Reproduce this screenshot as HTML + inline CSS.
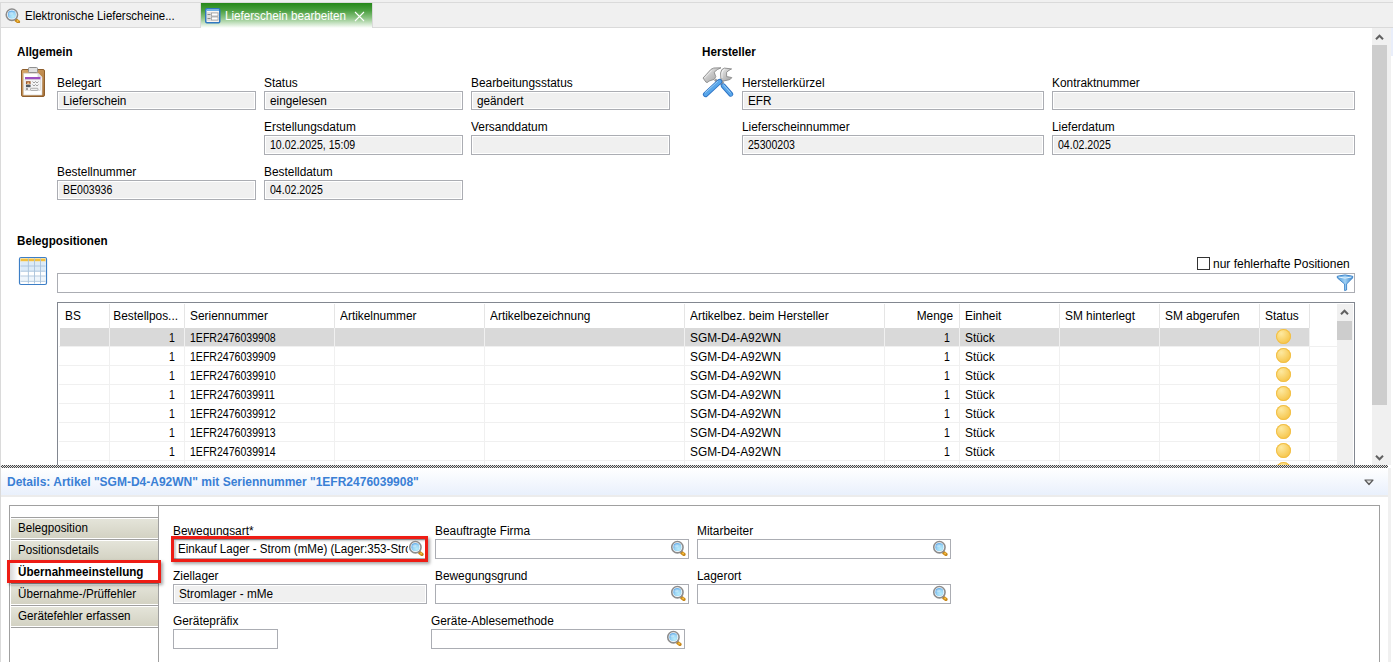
<!DOCTYPE html>
<html><head><meta charset="utf-8">
<style>
*{box-sizing:border-box;margin:0;padding:0}
html,body{width:1393px;height:662px;overflow:hidden;background:#fff;font-family:"Liberation Sans",sans-serif;font-size:12px;color:#000}
.a{position:absolute}
.l{position:absolute;font-size:12px;white-space:nowrap;line-height:14px;transform-origin:0 0;transform:scaleX(.99)}
.n{transform:scaleX(.88)!important}
.r{transform-origin:100% 0}
.t{display:inline-block;transform-origin:0 0;transform:scaleX(.98)}
.t.n{transform:scaleX(.88)}
.f{position:absolute;height:19px;border:1px solid #abadb3;background:#f0f0f0;box-shadow:inset 0 0 0 1px #fff;font-size:12px;line-height:18px;padding-left:5px;white-space:nowrap;overflow:hidden}
.w{background:#fff;box-shadow:none}
.h{position:absolute;font-weight:bold;font-size:12px;line-height:14px;white-space:nowrap;transform-origin:0 0;transform:scaleX(.97)}
.st{position:absolute;width:15px;height:15px;border-radius:50%;background:radial-gradient(circle at 35% 30%,#fde9a0,#f6c54a 75%);box-shadow:inset 0 0 0 1px #f2bf45}
.nv{position:absolute;left:11px;width:147px;height:19px;background:linear-gradient(#e4e4d9,#d3d2c3);font-size:12px;line-height:14px;padding:2px 0 0 7px;white-space:nowrap}
.nv .t{transform:scaleX(.97)}
.mg{position:absolute;width:16px;height:16px}
</style></head><body>
<svg width="0" height="0" style="position:absolute">
<defs>
<radialGradient id="mgb" cx="0.65" cy="0.7" r="0.75"><stop offset="0" stop-color="#b8ecfb"/><stop offset="0.6" stop-color="#9ad4f4"/><stop offset="1" stop-color="#5aa6e6"/></radialGradient>
<symbol id="mag" viewBox="0 0 16 16">
<path d="M10.4 10.2 L12.4 12.2" stroke="#b9c9da" stroke-width="2.6"/>
<path d="M11.9 12.9 L13.9 14.4" stroke="#c7881c" stroke-width="3.4" stroke-linecap="round"/>
<circle cx="13.1" cy="13.6" r="1" fill="#f8c040"/>
<circle cx="7.4" cy="7.2" r="5.65" fill="#fff" stroke="#8c8c8c" stroke-width="1.6"/>
<circle cx="7.4" cy="7.2" r="4.1" fill="url(#mgb)"/>
<ellipse cx="6.4" cy="5.8" rx="2.2" ry="1.5" fill="#fff" opacity="0.3"/>
</symbol>
</defs></svg>

<!-- tab bar -->
<div class="a" style="left:0;top:0;width:1393px;height:28px;background:#f0f0f0"></div>
<div class="a" style="left:0;top:2px;width:1393px;height:1px;background:#dadada"></div>
<div class="a" style="left:0;top:27px;width:1393px;height:1px;background:#dadada"></div>
<div class="a" style="left:0;top:2px;width:1px;height:660px;background:#dadada"></div>
<svg class="a" style="left:4px;top:6px" width="17" height="17" viewBox="0 0 17 17"><use href="#mag" x="0.5" y="1.5" width="16" height="16"/></svg>
<div class="l" style="left:25px;top:9px;transform:scaleX(.955)">Elektronische Lieferscheine...</div>
<div class="a" style="left:200px;top:3px;width:1px;height:24px;background:#dadada"></div>
<div class="a" style="left:201px;top:3px;width:171px;height:25px;background:linear-gradient(#258718 0%,#4a9f3f 30%,#8cc484 60%,#fff 100%)"></div>
<div class="a" style="left:372px;top:3px;width:1px;height:24px;background:#dadada"></div>
<svg class="a" style="left:205px;top:8px" width="16" height="16" viewBox="0 0 16 16">
<rect x="0.75" y="0.75" width="14" height="14" rx="1.2" fill="#fdf6ef" stroke="#2f78c0" stroke-width="1.5"/>
<rect x="1.5" y="1.5" width="12.5" height="1.5" fill="#6fb0e8"/>
<rect x="2" y="4" width="11.5" height="9" fill="#dedede"/>
<rect x="2.5" y="6" width="3" height="1" fill="#8a8a8a"/><rect x="2.5" y="10" width="3" height="1" fill="#8a8a8a"/>
<rect x="6.5" y="5" width="6.5" height="3" fill="#fff" stroke="#8a8a8a" stroke-width="0.6"/>
<rect x="6.5" y="9" width="6.5" height="3" fill="#fff" stroke="#8a8a8a" stroke-width="0.6"/>
</svg>
<div class="l" style="left:225px;top:9px;color:#fff;transform:scaleX(.97)">Lieferschein bearbeiten</div>
<svg class="a" style="left:354px;top:11px" width="11" height="11" viewBox="0 0 11 11"><path d="M1 1L10 10M10 1L1 10" stroke="#fff" stroke-width="1.1"/></svg>


<!-- clipboard icon -->
<svg class="a" style="left:19px;top:66px" width="28" height="33" viewBox="0 0 28 33">
<defs><linearGradient id="brd" x1="0" y1="0" x2="1" y2="1"><stop offset="0" stop-color="#d9a86a"/><stop offset="1" stop-color="#a87238"/></linearGradient></defs>
<rect x="2.5" y="3.5" width="23" height="27" rx="1.5" fill="url(#brd)" stroke="#8e5e2c" stroke-width="1"/>
<path d="M4.6 7.2 H19 L23 11 V29 H4.6 Z" fill="#fff" stroke="#d0d0d0" stroke-width="0.6"/>
<path d="M19 7.2 V11 H23" fill="#e8e8e8" stroke="#c0c0c0" stroke-width="0.5"/>
<rect x="9.5" y="1.5" width="9" height="5" rx="1" fill="#e0e0e0" stroke="#8f8f8f" stroke-width="1"/>
<rect x="6" y="11" width="15.5" height="2.6" fill="#9c4fc0"/>
<rect x="6" y="13.6" width="15.5" height="11" fill="#f4f4f4" stroke="#c8c8c8" stroke-width="0.5"/>
<rect x="7" y="15.2" width="4.6" height="2.8" fill="#9a5a30"/>
<circle cx="9.3" cy="17.4" r="1.2" fill="#f5c58a"/>
<rect x="7" y="18.6" width="4.6" height="2.6" fill="#505860"/>
<path d="M13.5 15.5l1.5 1.5 1.5-1.5 1.5 1.5 1.5-1.5M13.5 18.5l1.5 1.5 1.5-1.5 1.5 1.5 1.5-1.5M7 22l2 2M9 22l-2 2" stroke="#8a8a8a" stroke-width="0.8" fill="none"/>
<rect x="11.5" y="22.3" width="7.5" height="2" rx="0.8" fill="#fff" stroke="#8a8a8a" stroke-width="0.7"/>
</svg>

<!-- tools icon -->
<svg class="a" style="left:698px;top:62px" width="40" height="40" viewBox="0 0 40 40">
<defs><linearGradient id="met" x1="0" y1="0" x2="1" y2="1"><stop offset="0" stop-color="#f0f0f0"/><stop offset="0.5" stop-color="#c4c4c4"/><stop offset="1" stop-color="#a0a0a0"/></linearGradient></defs>
<path d="M17 17.5 L20.5 21 M25.2 19.5 L22.2 22.6" stroke="#9a9a9a" stroke-width="2.6"/>
<path d="M5 16 L8 12.8 L13 7.3 L15.8 6 L23 5.8 L19.3 7.6 L16.2 10.2 L17.2 13.1 L17.8 14.6 L16.3 17.3 L10.9 19.1 L9.9 20.3 L8.1 20.3 Z" fill="url(#met)" stroke="#8a8a8a" stroke-width="0.9" stroke-linejoin="round"/>
<path d="M6.5 16 L9 13.3 L13.8 8.4" stroke="#fff" stroke-width="0.8" fill="none" opacity="0.8"/>
<path d="M22.9 17 L22.6 11 Q23 6.8 26.4 6.1 L33.6 6.9 Q31 8 28.6 10.2 L28.6 14.6 Q31.5 15 33.8 15.6 Q32.6 17.6 31 17.8 L24.6 19.2 Z" fill="url(#met)" stroke="#8a8a8a" stroke-width="0.9" stroke-linejoin="round"/>
<path d="M24 16 L23.8 11.5 Q24.2 8 26.6 7.3" stroke="#fff" stroke-width="0.8" fill="none" opacity="0.8"/>
<path d="M7.6 32.4 L21.6 19.6" stroke="#2e73c4" stroke-width="5.4" stroke-linecap="round"/>
<path d="M7.6 32.4 L21.6 19.6" stroke="#58a6ea" stroke-width="3.6" stroke-linecap="round"/>
<path d="M7.2 30.6 L19.8 19.2" stroke="#b8dcf8" stroke-width="0.8"/>
<path d="M25.2 23.8 L32.8 32.2" stroke="#2e73c4" stroke-width="5" stroke-linecap="round"/>
<path d="M25.2 23.8 L32.8 32.2" stroke="#58a6ea" stroke-width="3.2" stroke-linecap="round"/>
<path d="M25.4 22.6 L32.6 30.6" stroke="#b8dcf8" stroke-width="0.8"/>
</svg>

<!-- table icon -->
<svg class="a" style="left:18px;top:256px" width="30" height="30" viewBox="0 0 30 30">
<rect x="1.5" y="1.5" width="27" height="27" rx="1.5" fill="#fff" stroke="#3c7ec6" stroke-width="1.2"/>
<rect x="2.5" y="2.5" width="25" height="3" fill="#f2c040"/>
<rect x="2.5" y="5.5" width="25" height="10" fill="#dcebf8"/>
<rect x="2.5" y="20.5" width="25" height="4" fill="#eef5fc"/>
<path d="M2.5 10H27.5M2.5 15.2H27.5M2.5 20H27.5M2.5 25.3H27.5" stroke="#a9c2da" stroke-width="0.9"/>
<path d="M10.4 2.5V27.5M16.5 2.5V27.5M22.5 2.5V27.5" stroke="#a9c2da" stroke-width="0.9"/>
</svg>



<div class="a" style="left:1391px;top:28px;width:2px;height:28px;background:#e9eefa"></div>
<!-- main scrollbar -->
<div class="a" style="left:1372px;top:28px;width:19px;height:437px;background:#f0f0f0"></div>
<div class="a" style="left:1372px;top:45px;width:15px;height:360px;background:#cdcdcd"></div>
<svg class="a" style="left:1375px;top:33px" width="9" height="8" viewBox="0 0 9 8"><path d="M1 6.2L4.5 2.7L8 6.2" stroke="#606060" stroke-width="2" fill="none"/></svg>
<svg class="a" style="left:1375px;top:454px" width="9" height="8" viewBox="0 0 9 8"><path d="M1 1.8L4.5 5.3L8 1.8" stroke="#606060" stroke-width="2" fill="none"/></svg>

<!-- Allgemein -->
<div class="h" style="left:17px;top:45px">Allgemein</div>
<div class="l" style="left:57px;top:76px">Belegart</div>
<div class="f" style="left:57px;top:91px;width:199px"><span class="t">Lieferschein</span></div>
<div class="l" style="left:264px;top:76px">Status</div>
<div class="f" style="left:264px;top:91px;width:199px"><span class="t">eingelesen</span></div>
<div class="l" style="left:471px;top:76px">Bearbeitungsstatus</div>
<div class="f" style="left:471px;top:91px;width:199px"><span class="t">geändert</span></div>
<div class="l" style="left:264px;top:120px">Erstellungsdatum</div>
<div class="f" style="height:20px;left:264px;top:135px;width:199px"><span class="t n">10.02.2025, 15:09</span></div>
<div class="l" style="left:471px;top:120px">Versanddatum</div>
<div class="f" style="height:20px;left:471px;top:135px;width:199px"></div>
<div class="l" style="left:57px;top:165px">Bestellnummer</div>
<div class="f" style="height:20px;left:57px;top:180px;width:199px"><span class="t n">BE003936</span></div>
<div class="l" style="left:264px;top:165px">Bestelldatum</div>
<div class="f" style="height:20px;left:264px;top:180px;width:199px"><span class="t n">04.02.2025</span></div>

<!-- Hersteller -->
<div class="h" style="left:702px;top:45px">Hersteller</div>
<div class="l" style="left:742px;top:76px">Herstellerkürzel</div>
<div class="f" style="left:742px;top:91px;width:302px"><span class="t">EFR</span></div>
<div class="l" style="left:1052px;top:76px">Kontraktnummer</div>
<div class="f" style="left:1052px;top:91px;width:303px"></div>
<div class="l" style="left:742px;top:120px">Lieferscheinnummer</div>
<div class="f" style="height:20px;left:742px;top:135px;width:302px"><span class="t n">25300203</span></div>
<div class="l" style="left:1052px;top:120px">Lieferdatum</div>
<div class="f" style="height:20px;left:1052px;top:135px;width:303px"><span class="t n">04.02.2025</span></div>

<!-- Belegpositionen -->
<div class="h" style="left:17px;top:234px">Belegpositionen</div>
<div class="a" style="left:1197px;top:257px;width:13px;height:13px;border:1px solid #333;background:#fff"></div>
<div class="l" style="left:1213px;top:257px;transform:none">nur fehlerhafte Positionen</div>
<div class="f w" style="height:20px;left:57px;top:273px;width:1298px"></div>

<!-- TABLE -->
<div class="a" style="left:57px;top:302px;width:1298px;height:170px;border:1px solid #828790;border-bottom:none"></div>
<div class="a" style="left:109px;top:304px;width:1px;height:24px;background:#e5e5e5"></div>
<div class="a" style="left:184px;top:304px;width:1px;height:24px;background:#e5e5e5"></div>
<div class="a" style="left:334px;top:304px;width:1px;height:24px;background:#e5e5e5"></div>
<div class="a" style="left:484px;top:304px;width:1px;height:24px;background:#e5e5e5"></div>
<div class="a" style="left:684px;top:304px;width:1px;height:24px;background:#e5e5e5"></div>
<div class="a" style="left:884px;top:304px;width:1px;height:24px;background:#e5e5e5"></div>
<div class="a" style="left:959px;top:304px;width:1px;height:24px;background:#e5e5e5"></div>
<div class="a" style="left:1059px;top:304px;width:1px;height:24px;background:#e5e5e5"></div>
<div class="a" style="left:1159px;top:304px;width:1px;height:24px;background:#e5e5e5"></div>
<div class="a" style="left:1259px;top:304px;width:1px;height:24px;background:#e5e5e5"></div>
<div class="a" style="left:1309px;top:304px;width:1px;height:24px;background:#e5e5e5"></div>
<div class="l" style="left:65px;top:309px">BS</div>
<div class="l r" style="left:109px;width:69px;text-align:right;top:309px">Bestellpos...</div>
<div class="l" style="left:190px;top:309px">Seriennummer</div>
<div class="l" style="left:340px;top:309px">Artikelnummer</div>
<div class="l" style="left:490px;top:309px">Artikelbezeichnung</div>
<div class="l" style="left:690px;top:309px">Artikelbez. beim Hersteller</div>
<div class="l r" style="left:884px;width:69px;text-align:right;top:309px">Menge</div>
<div class="l" style="left:965px;top:309px">Einheit</div>
<div class="l" style="left:1065px;top:309px">SM hinterlegt</div>
<div class="l" style="left:1165px;top:309px">SM abgerufen</div>
<div class="l" style="left:1265px;top:309px">Status</div>
<div class="a" style="left:60px;top:328px;width:49px;height:18px;background:#d9d9d9"></div>
<div class="a" style="left:110px;top:328px;width:74px;height:18px;background:#d9d9d9"></div>
<div class="a" style="left:185px;top:328px;width:149px;height:18px;background:#d9d9d9"></div>
<div class="a" style="left:335px;top:328px;width:149px;height:18px;background:#d9d9d9"></div>
<div class="a" style="left:485px;top:328px;width:199px;height:18px;background:#d9d9d9"></div>
<div class="a" style="left:685px;top:328px;width:199px;height:18px;background:#d9d9d9"></div>
<div class="a" style="left:885px;top:328px;width:74px;height:18px;background:#d9d9d9"></div>
<div class="a" style="left:960px;top:328px;width:99px;height:18px;background:#d9d9d9"></div>
<div class="a" style="left:1060px;top:328px;width:99px;height:18px;background:#d9d9d9"></div>
<div class="a" style="left:1160px;top:328px;width:99px;height:18px;background:#d9d9d9"></div>
<div class="a" style="left:1260px;top:328px;width:49px;height:18px;background:#d9d9d9"></div>
<div class="a" style="left:59px;top:346px;width:1278px;height:1px;background:#f0f0f0"></div>
<div class="l n r" style="left:109px;width:66px;text-align:right;top:331px">1</div>
<div class="l n" style="left:190px;top:331px">1EFR2476039908</div>
<div class="l" style="left:690px;top:331px">SGM-D4-A92WN</div>
<div class="l n r" style="left:884px;width:66px;text-align:right;top:331px">1</div>
<div class="l" style="left:965px;top:331px">Stück</div>
<div class="st" style="left:1276px;top:329px"></div>
<div class="a" style="left:59px;top:365px;width:1278px;height:1px;background:#f0f0f0"></div>
<div class="l n r" style="left:109px;width:66px;text-align:right;top:350px">1</div>
<div class="l n" style="left:190px;top:350px">1EFR2476039909</div>
<div class="l" style="left:690px;top:350px">SGM-D4-A92WN</div>
<div class="l n r" style="left:884px;width:66px;text-align:right;top:350px">1</div>
<div class="l" style="left:965px;top:350px">Stück</div>
<div class="st" style="left:1276px;top:348px"></div>
<div class="a" style="left:59px;top:384px;width:1278px;height:1px;background:#f0f0f0"></div>
<div class="l n r" style="left:109px;width:66px;text-align:right;top:369px">1</div>
<div class="l n" style="left:190px;top:369px">1EFR2476039910</div>
<div class="l" style="left:690px;top:369px">SGM-D4-A92WN</div>
<div class="l n r" style="left:884px;width:66px;text-align:right;top:369px">1</div>
<div class="l" style="left:965px;top:369px">Stück</div>
<div class="st" style="left:1276px;top:367px"></div>
<div class="a" style="left:59px;top:403px;width:1278px;height:1px;background:#f0f0f0"></div>
<div class="l n r" style="left:109px;width:66px;text-align:right;top:388px">1</div>
<div class="l n" style="left:190px;top:388px">1EFR2476039911</div>
<div class="l" style="left:690px;top:388px">SGM-D4-A92WN</div>
<div class="l n r" style="left:884px;width:66px;text-align:right;top:388px">1</div>
<div class="l" style="left:965px;top:388px">Stück</div>
<div class="st" style="left:1276px;top:386px"></div>
<div class="a" style="left:59px;top:422px;width:1278px;height:1px;background:#f0f0f0"></div>
<div class="l n r" style="left:109px;width:66px;text-align:right;top:407px">1</div>
<div class="l n" style="left:190px;top:407px">1EFR2476039912</div>
<div class="l" style="left:690px;top:407px">SGM-D4-A92WN</div>
<div class="l n r" style="left:884px;width:66px;text-align:right;top:407px">1</div>
<div class="l" style="left:965px;top:407px">Stück</div>
<div class="st" style="left:1276px;top:405px"></div>
<div class="a" style="left:59px;top:441px;width:1278px;height:1px;background:#f0f0f0"></div>
<div class="l n r" style="left:109px;width:66px;text-align:right;top:426px">1</div>
<div class="l n" style="left:190px;top:426px">1EFR2476039913</div>
<div class="l" style="left:690px;top:426px">SGM-D4-A92WN</div>
<div class="l n r" style="left:884px;width:66px;text-align:right;top:426px">1</div>
<div class="l" style="left:965px;top:426px">Stück</div>
<div class="st" style="left:1276px;top:424px"></div>
<div class="a" style="left:59px;top:460px;width:1278px;height:1px;background:#f0f0f0"></div>
<div class="l n r" style="left:109px;width:66px;text-align:right;top:445px">1</div>
<div class="l n" style="left:190px;top:445px">1EFR2476039914</div>
<div class="l" style="left:690px;top:445px">SGM-D4-A92WN</div>
<div class="l n r" style="left:884px;width:66px;text-align:right;top:445px">1</div>
<div class="l" style="left:965px;top:445px">Stück</div>
<div class="st" style="left:1276px;top:443px"></div>
<div class="a" style="left:59px;top:479px;width:1278px;height:1px;background:#f0f0f0"></div>
<div class="l n r" style="left:109px;width:66px;text-align:right;top:464px">1</div>
<div class="l n" style="left:190px;top:464px">1EFR2476039915</div>
<div class="l" style="left:690px;top:464px">SGM-D4-A92WN</div>
<div class="l n r" style="left:884px;width:66px;text-align:right;top:464px">1</div>
<div class="l" style="left:965px;top:464px">Stück</div>
<div class="st" style="left:1276px;top:462px"></div>
<div class="a" style="left:109px;top:328px;width:1px;height:140px;background:#f0f0f0"></div>
<div class="a" style="left:184px;top:328px;width:1px;height:140px;background:#f0f0f0"></div>
<div class="a" style="left:334px;top:328px;width:1px;height:140px;background:#f0f0f0"></div>
<div class="a" style="left:484px;top:328px;width:1px;height:140px;background:#f0f0f0"></div>
<div class="a" style="left:684px;top:328px;width:1px;height:140px;background:#f0f0f0"></div>
<div class="a" style="left:884px;top:328px;width:1px;height:140px;background:#f0f0f0"></div>
<div class="a" style="left:959px;top:328px;width:1px;height:140px;background:#f0f0f0"></div>
<div class="a" style="left:1059px;top:328px;width:1px;height:140px;background:#f0f0f0"></div>
<div class="a" style="left:1159px;top:328px;width:1px;height:140px;background:#f0f0f0"></div>
<div class="a" style="left:1259px;top:328px;width:1px;height:140px;background:#f0f0f0"></div>
<div class="a" style="left:1309px;top:328px;width:1px;height:140px;background:#f0f0f0"></div>
<div class="a" style="left:1337px;top:304px;width:16px;height:165px;background:#f0f0f0"></div>
<div class="a" style="left:1337px;top:321px;width:15px;height:19px;background:#cdcdcd"></div>
<svg class="a" style="left:1340px;top:308px" width="9" height="8" viewBox="0 0 9 8"><path d="M1 6.2L4.5 2.7L8 6.2" stroke="#606060" stroke-width="2" fill="none"/></svg>


<!-- splitter -->
<div class="a" style="left:1px;top:465px;width:1387px;height:3px;background-image:repeating-conic-gradient(#484848 0% 25%,#e0e0e0 0% 50%);background-size:2px 2px"></div>

<!-- details header -->
<div class="a" style="left:1px;top:468px;width:1387px;height:27px;background:linear-gradient(#fff,#e9f0fc)"></div>
<div class="a" style="left:1px;top:495px;width:1387px;height:2px;background:#ececec"></div>
<div class="a" style="left:1388px;top:468px;width:3px;height:194px;background:#f0f0f0"></div>
<div class="h" style="left:7px;top:475px;color:#3a7fd5;transform:none">Details: Artikel "SGM-D4-A92WN" mit Seriennummer "1EFR2476039908"</div>
<svg class="a" style="left:1364px;top:479px" width="10" height="7" viewBox="0 0 10 7"><path d="M1 1H9L5 5.5Z" fill="#e0e0e0" stroke="#5a5a5a" stroke-width="1.2" stroke-linejoin="round"/></svg>

<!-- details panel -->
<div class="a" style="left:9px;top:505px;width:1371px;height:170px;border:1px solid #a0a0a0;background:#fff"></div>
<div class="a" style="left:158px;top:506px;width:1px;height:156px;background:#a0a0a0"></div>

<!-- nav -->
<div class="a" style="left:11px;top:517px;width:147px;height:1px;background:#a0a0a0"></div>
<div class="nv" style="top:519px"><span class="t">Belegposition</span></div>
<div class="a" style="left:11px;top:539px;width:147px;height:1px;background:#a0a0a0"></div>
<div class="nv" style="top:541px"><span class="t">Positionsdetails</span></div>
<div class="a" style="left:11px;top:561px;width:147px;height:1px;background:#a0a0a0"></div>
<div class="a" style="left:11px;top:583px;width:147px;height:1px;background:#a0a0a0"></div>
<div class="nv" style="top:585px"><span class="t">Übernahme-/Prüffehler</span></div>
<div class="a" style="left:11px;top:605px;width:147px;height:1px;background:#a0a0a0"></div>
<div class="nv" style="top:607px"><span class="t">Gerätefehler erfassen</span></div>
<div class="a" style="left:11px;top:627px;width:147px;height:1px;background:#a0a0a0"></div>
<div class="a" style="left:7px;top:560px;width:154px;height:23px;border:3px solid #ee1c14;background:linear-gradient(90deg,#d8d8d8,#fff 8px);box-shadow:2px 2px 3px rgba(0,0,0,0.35)"></div>
<div class="h" style="left:18px;top:565px">Übernahmeeinstellung</div>

<!-- form -->
<div class="l" style="left:173px;top:524px">Bewegungsart*</div>
<div class="f w" style="height:20px;left:173px;top:539px;width:254px;padding-left:4px;line-height:18px"><span class="t" style="transform:scaleX(.965)">Einkauf Lager - Strom (mMe) (Lager:353-Strom</span></div>
<div class="a" style="left:408px;top:540px;width:17px;height:18px;background:#fff"></div>
<div class="a" style="left:171px;top:536px;width:257px;height:26px;border:3px solid #ee1c14;box-shadow:2px 2px 3px rgba(0,0,0,0.35),inset 2px 2px 2px rgba(0,0,0,0.22)"></div>
<svg class="mg" style="left:408px;top:540px"><use href="#mag"/></svg>
<div class="l" style="left:435px;top:524px">Beauftragte Firma</div>
<div class="f w" style="height:20px;left:435px;top:539px;width:254px"></div>
<svg class="mg" style="left:670px;top:540px"><use href="#mag"/></svg>
<div class="l" style="left:697px;top:524px">Mitarbeiter</div>
<div class="f w" style="height:20px;left:697px;top:539px;width:254px"></div>
<svg class="mg" style="left:932px;top:540px"><use href="#mag"/></svg>
<div class="l" style="left:173px;top:569px">Ziellager</div>
<div class="f" style="height:20px;left:173px;top:584px;width:254px"><span class="t">Stromlager - mMe</span></div>
<div class="l" style="left:435px;top:569px">Bewegungsgrund</div>
<div class="f w" style="height:20px;left:435px;top:584px;width:254px"></div>
<svg class="mg" style="left:670px;top:585px"><use href="#mag"/></svg>
<div class="l" style="left:697px;top:569px">Lagerort</div>
<div class="f w" style="height:20px;left:697px;top:584px;width:254px"></div>
<svg class="mg" style="left:932px;top:585px"><use href="#mag"/></svg>
<div class="l" style="left:173px;top:614px">Gerätepräfix</div>
<div class="f w" style="height:20px;left:173px;top:629px;width:105px"></div>
<div class="l" style="left:431px;top:614px">Geräte-Ablesemethode</div>
<div class="f w" style="height:20px;left:431px;top:629px;width:254px"></div>
<svg class="mg" style="left:666px;top:630px"><use href="#mag"/></svg>


<!-- funnel -->
<svg class="a" style="left:1336px;top:274px" width="18" height="18" viewBox="0 0 18 18">
<defs><linearGradient id="fun" x1="0" y1="0" x2="1" y2="0"><stop offset="0" stop-color="#4e9ad8"/><stop offset="0.5" stop-color="#9fd0f4"/><stop offset="1" stop-color="#3b86cc"/></linearGradient></defs>
<path d="M1.2 2.3 Q9 -0.5 16.8 2.3 L16.6 4 L10.6 10 V16 L8.6 16.6 V10 L1.4 4 Z" fill="url(#fun)" stroke="#3a82c8" stroke-width="0.9" stroke-linejoin="round"/>
<path d="M2.5 3 Q9 5.2 15.5 3" stroke="#e8f6ff" stroke-width="1" fill="none"/>
</svg>
</body></html>
